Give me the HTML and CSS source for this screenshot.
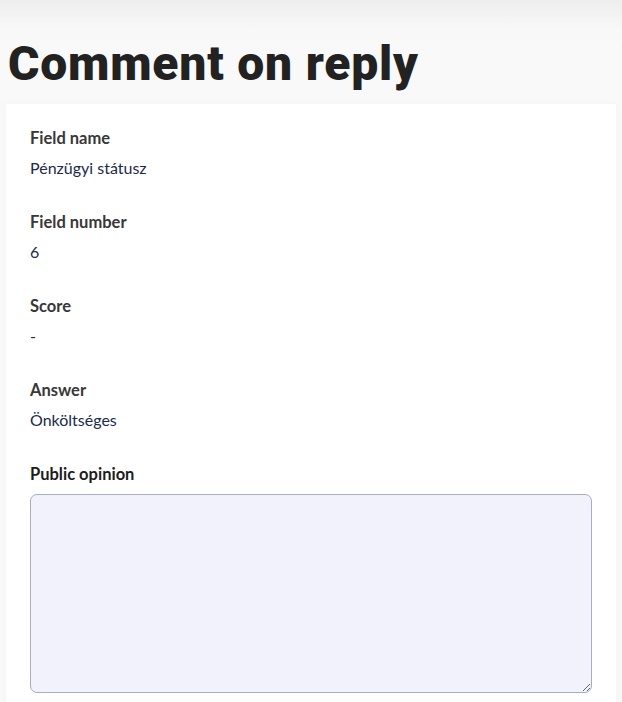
FILE: index.html
```html
<!DOCTYPE html>
<html lang="en">
<head>
<meta charset="utf-8">
<title>Comment on reply</title>
<link rel="stylesheet" href="styles.css">
</head>
<body>
<main class="page">
  <h1 class="title">Comment on reply</h1>
  <section class="card">
    <div class="field">
      <div class="label">Field name</div>
      <div class="value">Pénzügyi státusz</div>
    </div>
    <div class="field">
      <div class="label">Field number</div>
      <div class="value">6</div>
    </div>
    <div class="field">
      <div class="label">Score</div>
      <div class="value">-</div>
    </div>
    <div class="field">
      <div class="label">Answer</div>
      <div class="value">Önköltséges</div>
    </div>
    <div class="field form-field">
      <label class="label label-strong" for="opinion">Public opinion</label>
      <textarea id="opinion" class="textarea"></textarea>
    </div>
  </section>
</main>
</body>
</html>
```
FILE: styles.css
```css
html, body {
  margin: 0;
  padding: 0;
}
body {
  background: linear-gradient(#eeeeee 0px, #f8f8f8 30px, #f9f9f9 60px);
  background-attachment: fixed;
  font-family: "Lato", "Open Sans", sans-serif;
  min-height: 702px;
}
.page {
  padding: 36px 6px 0;
}
.title {
  margin: 0 0 0 2px;
  font-family: "Roboto", sans-serif;
  font-weight: 900;
  font-size: 48px;
  letter-spacing: 0.8px;
  line-height: 56px;
  color: #222222;
}
.card {
  margin-top: 12px;
  background: #ffffff;
  padding: 22px 24px 24px;
  box-shadow: 0 0 8px rgba(0, 0, 0, 0.03);
  display: flex;
  flex-direction: column;
  gap: 30px;
}
.field {
  display: flex;
  flex-direction: column;
  gap: 6px;
}
.label {
  font-weight: 700;
  font-size: 16.5px;
  line-height: 24px;
  color: #383838;
}
.label-strong {
  color: #1c1c1c;
}
.value {
  font-size: 16px;
  line-height: 24px;
  color: #1b2a4e;
}
.form-field {
  gap: 8px;
}
.textarea {
  display: block;
  box-sizing: border-box;
  width: 100%;
  height: 199px;
  margin: 0;
  border: 1px solid #a9abcb;
  border-radius: 7px;
  background: #f1f2fb;
  font-family: "Lato", sans-serif;
  font-size: 16px;
  resize: vertical;
}
```
